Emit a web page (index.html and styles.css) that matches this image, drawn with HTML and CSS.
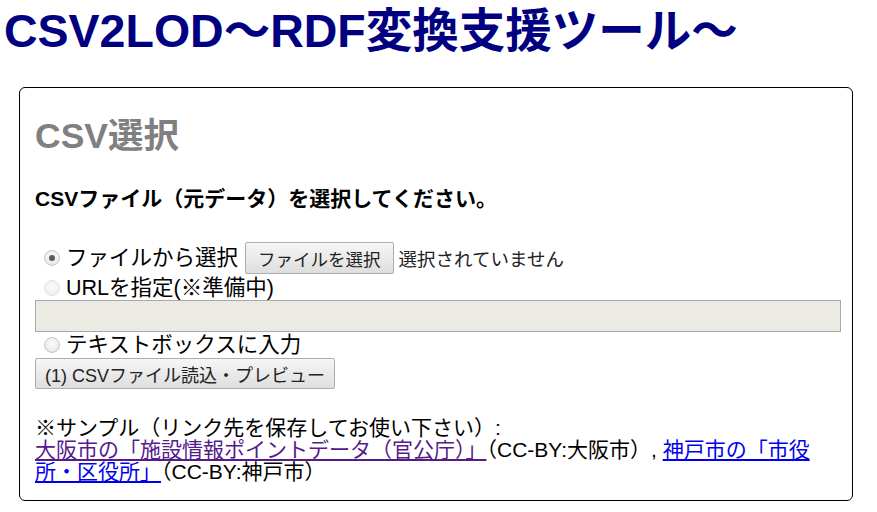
FILE: index.html
```html
<!DOCTYPE html>
<html lang="ja">
<head>
<meta charset="utf-8">
<title>CSV2LOD</title>
<link rel="stylesheet" href="styles.css">
</head>
<body>
<h1 class="title">CSV2LOD～RDF変換支援ツール～</h1>
<section class="box">
  <h2 class="box-title">CSV選択</h2>
  <p class="lead">CSVファイル（元データ）を選択してください。</p>
  <div class="options">
    <label class="row row-file">
      <span class="radio checked"></span>
      <span class="opt-label">ファイルから選択</span>
      <span class="file-btn">ファイルを選択</span>
      <span class="file-none">選択されていません</span>
    </label>
    <label class="row row-url">
      <span class="radio disabled"></span>
      <span class="opt-label">URLを指定(※準備中)</span>
    </label>
    <div class="url-input"></div>
    <label class="row row-text">
      <span class="radio"></span>
      <span class="opt-label">テキストボックスに入力</span>
    </label>
    <div class="btn-row"><span class="btn">(1) CSVファイル読込・プレビュー</span></div>
  </div>
  <p class="sample">※サンプル（リンク先を保存してお使い下さい）:<br><a class="visited" href="#">大阪市の「施設情報ポイントデータ（官公庁）」</a>（CC-BY:大阪市）, <a class="link" href="#">神戸市の「市役所・区役所」</a>（CC-BY:神戸市）</p>
</section>
</body>
</html>
```

FILE: styles.css
```css
html, body {
  margin: 0;
  padding: 0;
  background: #fff;
}
body {
  font-family: "Liberation Sans", "Noto Sans CJK JP", sans-serif;
  color: #000;
}
.title {
  margin: 0;
  padding: 5px 0 0 4px;
  height: 55px;
  font-size: 46.5px;
  line-height: 52px;
  font-weight: bold;
  color: #000080;
  white-space: nowrap;
}
.box {
  margin: 27px 0 0 19px;
  width: 834px;
  border: 1px solid #000;
  border-radius: 6px;
  padding: 0 11px 17px 15px;
  box-sizing: border-box;
}
.box-title {
  margin: 28px 0 0 0;
  font-size: 35.5px;
  line-height: 40px;
  font-weight: bold;
  color: #808080;
}
.lead {
  margin: 31px 0 0 0;
  font-size: 21px;
  line-height: 24px;
  font-weight: bold;
}
.options {
  margin-top: 30px;
  display: flex;
  flex-direction: column;
}
.row {
  display: flex;
  align-items: center;
  font-size: 21.5px;
  padding-left: 9px;
}
.row-file { height: 34px; }
.row-url { height: 25px; }
.row-text { height: 24px; margin-top: 1px; }
.radio {
  width: 16px;
  height: 16px;
  box-sizing: border-box;
  border-radius: 50%;
  border: 1px solid #c8c8c8;
  background: radial-gradient(circle at 50% 40%, #fdfdfd 0%, #ececec 60%, #dadada 100%);
  margin-right: 6px;
  flex: none;
  position: relative;
}
.radio.disabled {
  border-color: #e0e0e0;
  background: radial-gradient(circle at 50% 40%, #fafafa 0%, #f0f0f0 70%, #e8e8e8 100%);
}
.radio.checked::after {
  content: "";
  position: absolute;
  left: 4px;
  top: 4px;
  width: 6px;
  height: 6px;
  border-radius: 50%;
  background: #5a5a5a;
}
.opt-label {
  line-height: 24px;
}
.file-btn {
  margin-left: 7px;
  height: 32px;
  box-sizing: border-box;
  padding: 0 12px;
  display: flex;
  align-items: center;
  font-size: 17.5px;
  font-weight: normal;
  color: #222;
  border: 1px solid #adadad;
  border-radius: 2px;
  background: linear-gradient(#f6f6f6, #dedede);
}
.file-none {
  margin-left: 5px;
  font-size: 18.5px;
  color: #222;
}
.url-input {
  height: 32px;
  box-sizing: border-box;
  border: 1px solid #a9a9a9;
  background: #ebebe4;
}
.btn-row {
  margin-top: 1px;
  display: flex;
}
.btn {
  height: 31px;
  width: 300px;
  box-sizing: border-box;
  display: flex;
  align-items: center;
  justify-content: center;
  font-size: 18px;
  color: #222;
  border: 1px solid #adadad;
  border-radius: 2px;
  background: linear-gradient(#f6f6f6, #dedede);
}
.sample {
  margin: 28px 0 0 0;
  font-size: 21px;
  line-height: 22px;
}
.sample a {
  text-decoration: underline;
}
.sample a.visited { color: #551a8b; }
.sample a.link { color: #0000ee; }
```
